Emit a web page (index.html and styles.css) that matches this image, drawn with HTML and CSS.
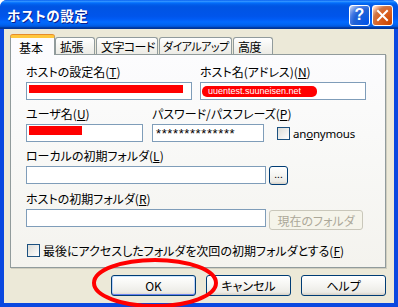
FILE: index.html
```html
<!DOCTYPE html>
<html lang="ja">
<head>
<meta charset="utf-8">
<title>ホストの設定</title>
<link rel="stylesheet" href="styles.css">
</head>
<body>
<div class="window">
  <div class="titlebar">
    <span class="title">ホストの設定</span>
    <div class="title-buttons">
      <div class="tb tb-help"><span class="q">?</span></div>
      <div class="tb tb-close">
        <svg width="19" height="19" viewBox="0 0 19 19"><path d="M5 5 L14 14 M14 5 L5 14" stroke="#fff" stroke-width="2" stroke-linecap="square"/></svg>
      </div>
    </div>
  </div>
  <div class="frame">
    <div class="tabs">
      <div class="tab active">基本</div>
      <div class="tab tab-w40">拡張</div>
      <div class="tab tab-w62">文字コード</div>
      <div class="tab tab-w73 tab-tight">ダイアルアップ</div>
      <div class="tab tab-w40">高度</div>
    </div>
    <div class="panel">
      <div class="row">
        <div class="field w166">
          <div class="label">ホストの設定名(<u>T</u>)</div>
          <div class="input"><span class="redact r-name"></span></div>
        </div>
        <div class="field w166">
          <div class="label">ホスト名(アドレス)(<u>N</u>)</div>
          <div class="input"><span class="redact r-host">uuentest.suuneisen.net</span></div>
        </div>
      </div>
      <div class="row row-user">
        <div class="field w117">
          <div class="label">ユーザ名(<u>U</u>)</div>
          <div class="input"><span class="redact r-user"></span></div>
        </div>
        <div class="field w112">
          <div class="label">パスワード/パスフレーズ(<u>P</u>)</div>
          <div class="input"><span class="pw">**************</span></div>
        </div>
        <div class="check anon"><span class="box"></span><span class="latin">an<u>o</u>nymous</span></div>
      </div>
      <div class="field">
        <div class="label">ローカルの初期フォルダ(<u>L</u>)</div>
        <div class="line">
          <div class="input w240"></div>
          <div class="btn btn-dots">...</div>
        </div>
      </div>
      <div class="field">
        <div class="label">ホストの初期フォルダ(<u>R</u>)</div>
        <div class="line">
          <div class="input w240"></div>
          <div class="btn btn-cur disabled">現在のフォルダ</div>
        </div>
      </div>
      <div class="check last"><span class="box"></span><span>最後にアクセスしたフォルダを次回の初期フォルダとする(<u>F</u>)</span></div>
    </div>
    <div class="buttons">
      <div class="btn btn-main default">OK</div>
      <div class="btn btn-main">キャンセル</div>
      <div class="btn btn-main">ヘルプ</div>
    </div>
  </div>
  <svg class="mark" width="398" height="307" viewBox="0 0 398 307"><ellipse cx="155" cy="283" rx="61" ry="23" fill="none" stroke="#f00" stroke-width="4"/></svg>
</div>
</body>
</html>
```

FILE: styles.css
```css
* { box-sizing: border-box; }
html, body { margin: 0; padding: 0; background: #fff; }
body {
  font-family: "Noto Sans CJK JP", "Noto Sans", sans-serif;
  font-size: 12px;
  font-feature-settings: "palt";
  color: #000;
}
.window {
  position: relative;
  width: 398px;
  height: 307px;
  display: flex;
  flex-direction: column;
  border-radius: 7px 7px 0 0;
  overflow: hidden;
  background: #0a48e0;
}
.titlebar {
  height: 29px;
  flex: none;
  display: flex;
  align-items: center;
  justify-content: space-between;
  padding: 1px 5px 0 7px;
  background: linear-gradient(180deg, #0058ee 0%, #3593ff 4%, #288eff 6%, #127dff 8%, #036ffc 10%, #0262ee 14%, #0057e5 20%, #0054e3 24%, #0055eb 56%, #005bf5 66%, #026afe 76%, #0062ef 86%, #0052d6 92%, #0040ab 94%, #003092 100%);
}
.title {
  color: #fff;
  font-weight: bold;
  font-size: 13.5px;
  letter-spacing: 0.6px;
  text-shadow: 1px 1px 0 #0a1f8f;
}
.title-buttons { display: flex; gap: 2px; }
.tb {
  width: 21px;
  height: 21px;
  border: 1px solid #fff;
  border-radius: 3px;
  display: flex;
  align-items: center;
  justify-content: center;
}
.tb-help {
  background: radial-gradient(circle at 90% 90%, #0054e9 0%, #2263d5 55%, #4479e4 70%, #a3bbec 90%, #fff 100%);
}
.tb-close {
  background: radial-gradient(circle at 90% 90%, #cc4600 0%, #dc6527 55%, #cd7546 70%, #ffccb2 90%, #fff 100%);
}
.q {
  color: #fff;
  font-family: "Liberation Sans", sans-serif;
  font-weight: bold;
  font-size: 16px;
  line-height: 1;
}
.frame {
  flex: 1;
  display: flex;
  flex-direction: column;
  background: #ece9d8;
  border-left: 4px solid #0a48e0;
  border-right: 4px solid #0a48e0;
  border-bottom: 4px solid #0a48e0;
  padding: 6px 8px 0 6px;
}
.tabs {
  height: 19px;
  display: flex;
  align-items: flex-end;
}
.tab {
  height: 17px;
  padding: 1px 0 0 4px;
  line-height: 15px;
  letter-spacing: -0.6px;
  border: 1px solid #919b9c;
  border-bottom: none;
  border-radius: 3px 3px 0 0;
  background: linear-gradient(180deg, #fff 0%, #f7f7f4 40%, #ecebe5 100%);
  margin-left: 1px;
  white-space: nowrap;
  overflow: hidden;
}
.tab-tight { font-size: 11px; letter-spacing: -0.5px; padding-left: 3px; }
.tab.active {
  width: 45px;
  height: 20px;
  margin: 0 0 -1px 0;
  padding: 2px 0 0 8px;
  letter-spacing: 0;
  position: relative;
  z-index: 1;
  background: #fcfcfe;
  border-top: 3px solid #ffc73c;
  box-shadow: 0 -1px 0 #e68b2c;
}
.tab.active + .tab { margin-left: 0; }
.tab-w40 { width: 40px; }
.tab-w62 { width: 62px; }
.tab-w73 { width: 73px; }
.panel {
  width: 376px;
  height: 214px;
  flex: none;
  border: 1px solid #919b9c;
  background: linear-gradient(180deg, #fcfcfe 0%, #f8f8f6 50%, #f4f3ee 100%);
  box-shadow: 1px 1px 0 #d0cebf;
  padding: 10px 0 0 15px;
  display: flex;
  flex-direction: column;
  gap: 7px;
}
.row { display: flex; gap: 8px; align-items: flex-end; }
.row-user { gap: 9px; }
.field { display: flex; flex-direction: column; }
.w166 { width: 166px; }
.w117 { width: 117px; }
.w112 { width: 112px; }
.w240 { width: 240px; }
.label {
  height: 14px;
  line-height: 14px;
  margin-bottom: 3px;
  white-space: nowrap;
}
.input {
  height: 18px;
  border: 1px solid #7f9db9;
  background: #fff;
  display: flex;
  align-items: flex-start;
  overflow: hidden;
}
.redact { display: block; background: #f00; }
.r-name { width: 154px; height: 8px; margin: 2px 0 0 2px; }
.r-user { width: 53px; height: 9px; margin: 1px 0 0 2px; }
.r-host {
  width: 115px;
  height: 11px;
  margin: 3px 0 0 1px;
  border-radius: 5px;
  color: #fff;
  font-family: "Liberation Sans", sans-serif;
  font-size: 9px;
  line-height: 11px;
  padding-left: 6px;
  white-space: nowrap;
  overflow: hidden;
}
.pw {
  font-family: "Liberation Sans", sans-serif;
  font-size: 13px;
  line-height: 17px;
  letter-spacing: 0.6px;
  padding-left: 3px;
}
.check { display: flex; align-items: center; gap: 3px; height: 14px; white-space: nowrap; }
.anon { margin-left: 4px; margin-bottom: 2px; }
.latin { font-family: "Noto Sans", sans-serif; font-size: 11.5px; letter-spacing: -0.2px; }
.last { margin-top: 6px; margin-left: 1px; }
.box {
  width: 13px;
  height: 13px;
  flex: none;
  border: 1px solid #1c5180;
  background: linear-gradient(135deg, #dcdcd7 0%, #ffffff 100%);
}
.line { display: flex; gap: 3px; align-items: flex-start; }
.btn {
  display: flex;
  align-items: center;
  justify-content: center;
  border: 1px solid #003c74;
  border-radius: 3px;
  background: linear-gradient(180deg, #ffffff 0%, #f7f7f4 40%, #ecebe6 85%, #d6d0c5 100%);
  white-space: nowrap;
}
.btn-dots { width: 19px; height: 19px; font-size: 10px; line-height: 1; padding-bottom: 3px; }
.btn-cur { width: 94px; height: 20px; margin-top: 1px; }
.btn.disabled {
  border-color: #c9c7ba;
  background: #f5f4ea;
  color: #aca899;
}
.buttons {
  display: flex;
  justify-content: flex-end;
  gap: 10px;
  margin-top: 7px;
}
.btn-main { width: 85px; height: 21px; }
.btn.default {
  box-shadow: inset 0 1px 0 #cee7ff, inset 0 -1px 0 #6982ee, inset 1px 0 0 #b9d1fa, inset -1px 0 0 #b9d1fa;
}
.mark { position: absolute; left: 0; top: 0; pointer-events: none; }
```
